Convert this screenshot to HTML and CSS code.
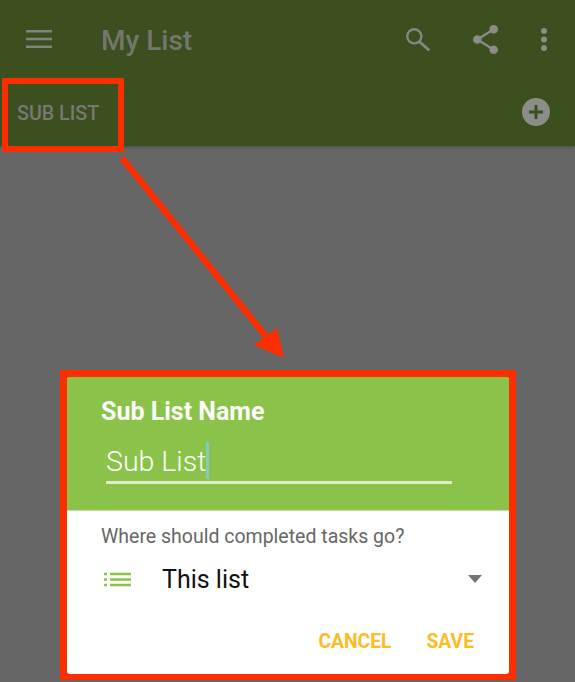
FILE: index.html
```html
<!DOCTYPE html>
<html lang="en">
<head>
<meta charset="utf-8">
<title>Sub List</title>
<link rel="stylesheet" href="styles.css">
</head>
<body>
<header class="appbar">
  <div class="toolbar">
    <svg class="menu-icon" width="26" height="18" viewBox="0 0 26 18"><path d="M0 1.300h26M0 9h26M0 16.700h26" stroke="#7f8579" stroke-width="2.600" fill="none"/></svg>
    <h1 class="title">My List</h1>
    <div class="actions">
      <svg class="search-icon" width="24" height="24" viewBox="0 0 24 24"><circle cx="8.300" cy="9.300" r="7.100" stroke="#84887f" stroke-width="2.400" fill="none"/><path d="M13.300 14.500l10 9" stroke="#84887f" stroke-width="2.800" fill="none"/></svg>
      <svg class="share-icon" width="25" height="29" viewBox="0 0 25 29"><path d="M20.700 4.300L4.300 14.500l16.400 10.200" stroke="#8a8c86" stroke-width="2.400" fill="none"/><circle cx="20.700" cy="4.300" r="4.300" fill="#8a8c86"/><circle cx="4.300" cy="14.500" r="4.300" fill="#8a8c86"/><circle cx="20.700" cy="24.700" r="4.300" fill="#8a8c86"/></svg>
      <svg class="more-icon" width="6" height="23" viewBox="0 0 6 23"><circle cx="3" cy="3" r="3" fill="#8a8c86"/><circle cx="3" cy="11.500" r="3" fill="#8a8c86"/><circle cx="3" cy="20" r="3" fill="#8a8c86"/></svg>
    </div>
  </div>
  <div class="tabbar">
    <span class="tab">SUB LIST</span>
    <svg class="add-icon" width="28" height="28" viewBox="0 0 28 28"><circle cx="14" cy="14" r="14" fill="#8b8d88"/><path d="M14 7v14M7 14h14" stroke="#3b4f1f" stroke-width="3" fill="none"/></svg>
  </div>
</header>

<div class="callout-tab"></div>
<svg class="arrow" width="575" height="682" viewBox="0 0 575 682"><path d="M122 158L268 339" stroke="#fb2e00" stroke-width="6.500" fill="none"/><path d="M284 358L254 345L277 328Z" fill="#fb2e00"/></svg>

<section class="dialog">
  <div class="dialog-head">
    <h2 class="dialog-title">Sub List Name</h2>
    <div class="field"><span class="field-text">Sub List</span><span class="caret"></span></div>
  </div>
  <div class="dialog-body">
    <p class="question">Where should completed tasks go?</p>
    <div class="select">
      <svg class="list-icon" width="27" height="15" viewBox="0 0 27 15"><path d="M6 2h21M6 7.500h21M6 13h21" stroke="#8bc34a" stroke-width="2.400" fill="none"/><path d="M0 2h3M0 7.500h3M0 13h3" stroke="#8bc34a" stroke-width="2.400" fill="none"/></svg>
      <span class="select-value">This list</span>
      <svg class="caret-down" width="14" height="8" viewBox="0 0 14 8"><path d="M0 0h14L7 8Z" fill="#757575"/></svg>
    </div>
    <div class="buttons">
      <span class="btn">CANCEL</span>
      <span class="btn">SAVE</span>
    </div>
  </div>
</section>
</body>
</html>
```
FILE: styles.css
```css
* { box-sizing: border-box; }
html, body { margin: 0; height: 100%; }
body {
  width: 575px;
  height: 682px;
  overflow: hidden;
  position: relative;
  background: #666666;
  font-family: Roboto, "Liberation Sans", sans-serif;
}
.appbar {
  height: 146px;
  background: #3b4f1f;
  box-shadow: 0 1px 3px rgba(0, 0, 0, 0.25);
}
.toolbar {
  height: 78px;
  display: flex;
  align-items: center;
  padding: 0 28px 0 26px;
}
.title {
  margin: 0 0 0 49px;
  font-size: 28px;
  font-weight: 500;
  color: #73776d;
  line-height: 1;
  padding-top: 4px;
}
.actions {
  margin-left: auto;
  display: flex;
  align-items: center;
  gap: 43px;
}
.tabbar {
  height: 68px;
  display: flex;
  align-items: center;
  justify-content: space-between;
  padding: 0 25px 0 17px;
}
.tab {
  font-size: 19.700px;
  font-weight: 500;
  color: #767a72;
  margin-top: 2px;
}
.callout-tab {
  position: absolute;
  left: 2px;
  top: 78px;
  width: 122px;
  height: 74px;
  border: 6px solid #fb2e00;
}
.arrow {
  position: absolute;
  left: 0;
  top: 0;
}
.dialog {
  position: absolute;
  left: 60px;
  top: 370px;
  width: 456px;
  height: 310px;
  border: 7px solid #fb2e00;
  border-bottom-width: 6px;
  display: flex;
  flex-direction: column;
  background: #fb2e00;
}
.dialog-head {
  height: 134px;
  background: #8bc34a;
  border-bottom: 1px solid #c5e1a5;
  border-radius: 2px 2px 0 0;
  padding: 21px 57px 0 34px;
}
.dialog-title {
  margin: 0;
  font-size: 25px;
  font-weight: 700;
  line-height: 28px;
  color: #fbfdf8;
}
.field {
  margin: 13px 0 0 5px;
  display: flex;
  align-items: center;
  border-bottom: 3px solid #dcedc8;
  box-sizing: content-box;
  height: 42px;
}
.field-text {
  font-size: 28.500px;
  font-weight: 300;
  color: #fff;
  margin-top: 2px;
}
.caret {
  width: 2.500px;
  height: 37px;
  background: #80cbc4;
}
.dialog-body {
  flex: 1;
  background: #fff;
  border-radius: 0 0 3px 3px;
  padding: 14px 27px 0 34px;
  display: flex;
  flex-direction: column;
}
.question {
  margin: 0;
  font-size: 19.500px;
  line-height: 24px;
  color: #666;
}
.select {
  display: flex;
  align-items: center;
  height: 30px;
  margin-top: 15px;
  padding-left: 3px;
}
.select-value {
  font-size: 25px;
  color: #111;
  margin-left: 31px;
}
.caret-down { margin-left: auto; }
.buttons {
  display: flex;
  justify-content: flex-end;
  gap: 35px;
  margin-top: 36px;
  padding-right: 8px;
}
.btn {
  font-size: 19.300px;
  font-weight: 700;
  color: #fdbb25;
  line-height: 24px;
}
```
